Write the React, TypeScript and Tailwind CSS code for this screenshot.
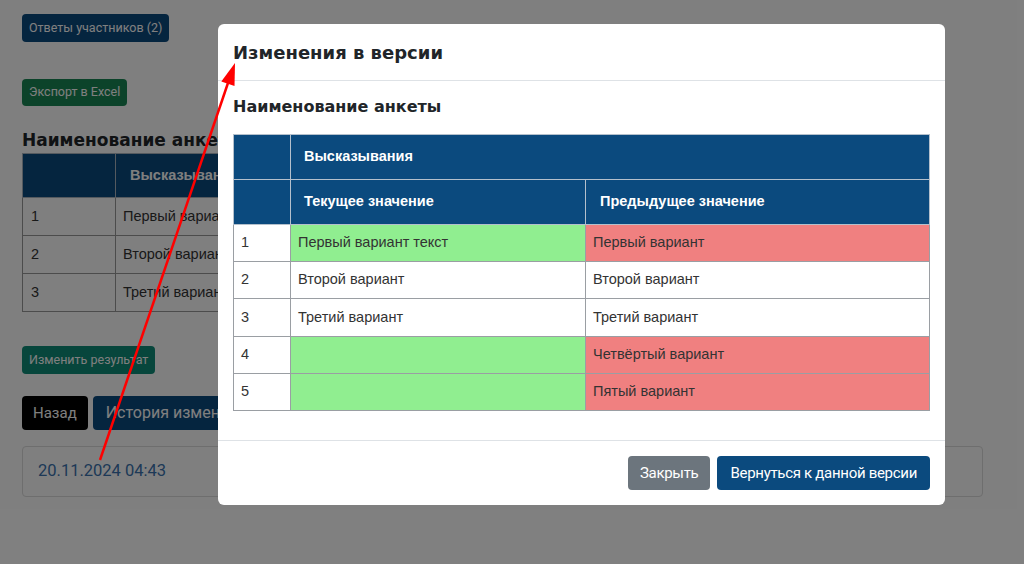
import React from "react";

const btnFont = { fontFamily: "Roboto, 'Noto Sans', sans-serif" };
const arial = { fontFamily: "'Liberation Sans', Arial, sans-serif" };

function BgTable() {
  const rows = [
    ["1", "Первый вариант текст"],
    ["2", "Второй вариант"],
    ["3", "Третий вариант"],
  ];
  return (
    <table className="mt-[1px] w-[700px] border-collapse text-[14.5px] text-[#333]" style={arial}>
      <thead>
        <tr className="h-[44px] bg-[#0b4a7e] text-white">
          <th className="w-[93px] border border-[#aab4be]"></th>
          <th className="border border-[#aab4be] px-[14px] text-left font-bold">Высказывания</th>
        </tr>
      </thead>
      <tbody>
        {rows.map((r) => (
          <tr key={r[0]} className="h-[38px]">
            <td className="border border-[#999] px-[8px]">{r[0]}</td>
            <td className="border border-[#999] px-[7px]">{r[1]}</td>
          </tr>
        ))}
      </tbody>
    </table>
  );
}

function ModalTable() {
  const rows: [string, string, string, string, string][] = [
    ["1", "Первый вариант текст", "Первый вариант", "bg-[#90ee90]", "bg-[#f08080]"],
    ["2", "Второй вариант", "Второй вариант", "bg-white", "bg-white"],
    ["3", "Третий вариант", "Третий вариант", "bg-white", "bg-white"],
    ["4", "", "Четвёртый вариант", "bg-[#90ee90]", "bg-[#f08080]"],
    ["5", "", "Пятый вариант", "bg-[#90ee90]", "bg-[#f08080]"],
  ];
  return (
    <table className="w-[697px] border-collapse text-[14.5px] text-[#333]" style={arial}>
      <thead className="text-white">
        <tr className="h-[45px] bg-[#0b4a7e]">
          <th className="w-[57px] border border-[#b4c0cc]"></th>
          <th colSpan={2} className="border border-[#b4c0cc] px-[13px] text-left font-bold">Высказывания</th>
        </tr>
        <tr className="h-[45px] bg-[#0b4a7e]">
          <th className="border border-[#b4c0cc]"></th>
          <th className="w-[295px] border border-[#b4c0cc] px-[13px] text-left font-bold">Текущее значение</th>
          <th className="border border-[#b4c0cc] px-[14px] text-left font-bold">Предыдущее значение</th>
        </tr>
      </thead>
      <tbody>
        {rows.map((r) => (
          <tr key={r[0]} className="h-[37.2px]">
            <td className="border border-[#9a9ea3] bg-white px-[7px]">{r[0]}</td>
            <td className={`border border-[#9a9ea3] px-[7px] ${r[3]}`}>{r[1]}</td>
            <td className={`border border-[#9a9ea3] px-[7px] ${r[4]}`}>{r[2]}</td>
          </tr>
        ))}
      </tbody>
    </table>
  );
}

export default function App() {
  return (
    <div className="relative h-[564px] w-[1024px] overflow-hidden bg-white">
      {/* Page */}
      <div className="flex flex-col items-start px-[22px] pt-[14px]">
        <button className="h-[28px] rounded-[4px] bg-[#0b4a7e] px-[7px] text-[12.5px] text-white" style={btnFont}>
          Ответы участников (2)
        </button>
        <button className="mt-[37px] h-[27px] rounded-[4px] bg-[#198754] px-[7px] text-[12.5px] text-white" style={btnFont}>
          Экспорт в Excel
        </button>
        <h3 className="mt-[22px] text-[17px] font-bold leading-[24px] text-[#212529]" style={{ fontFamily: "'DejaVu Sans', sans-serif" }}>
          Наименование анкеты
        </h3>
        <BgTable />
        <button className="mt-[34px] h-[28px] rounded-[4px] bg-[#0e8c78] px-[7px] text-[12.5px] text-white" style={btnFont}>
          Изменить результат
        </button>
        <div className="mt-[22px] flex gap-[5px]">
          <button className="h-[34px] rounded-[4px] bg-black px-[11px] text-[15px] text-white" style={btnFont}>
            Назад
          </button>
          <button className="h-[34px] rounded-[4px] bg-[#0b4a7e] px-[13px] text-[16px] text-white" style={btnFont}>
            История изменений
          </button>
        </div>
        <div className="mt-[16px] flex h-[51px] w-[961px] items-center rounded-[4px] border border-[#dcdcdc] px-[15px]">
          <span className="text-[16.5px] text-[#3a72ae]" style={btnFont}>20.11.2024 04:43</span>
        </div>
      </div>

      {/* Overlay */}
      <div className="absolute inset-0 bg-black/50"></div>

      {/* Modal */}
      <div className="absolute left-[218px] top-[24px] w-[727px] rounded-[6px] bg-white">
        <div className="flex h-[57px] items-center border-b border-[#dee2e6] px-[15px]">
          <h2 className="text-[18px] font-bold text-[#212529]" style={{ fontFamily: "'DejaVu Sans', sans-serif" }}>
            Изменения в версии
          </h2>
        </div>
        <div className="px-[15px] pb-[29px] pt-[16px]">
          <h3 className="mb-[17px] text-[16px] font-bold leading-[20px] text-[#212529]" style={{ fontFamily: "'DejaVu Sans', sans-serif" }}>
            Наименование анкеты
          </h3>
          <ModalTable />
        </div>
        <div className="flex justify-end gap-[7px] border-t border-[#dee2e6] px-[15px] pb-[15px] pt-[15px]">
          <button className="h-[34px] rounded-[4px] bg-[#6c757d] px-[12px] text-[15px] tracking-[-0.3px] text-white" style={btnFont}>
            Закрыть
          </button>
          <button className="h-[34px] rounded-[4px] bg-[#0b4a7e] px-[13px] text-[15px] tracking-[-0.3px] text-white" style={btnFont}>
            Вернуться к данной версии
          </button>
        </div>
      </div>

      {/* Red arrow annotation */}
      <svg className="pointer-events-none absolute inset-0" width="1024" height="564" viewBox="0 0 1024 564">
        <line x1="100" y1="460" x2="229" y2="80" stroke="#ff0000" strokeWidth="2.5" />
        <polygon points="235,63 234.5,86 221.3,81.5" fill="#ff0000" />
      </svg>
    </div>
  );
}
